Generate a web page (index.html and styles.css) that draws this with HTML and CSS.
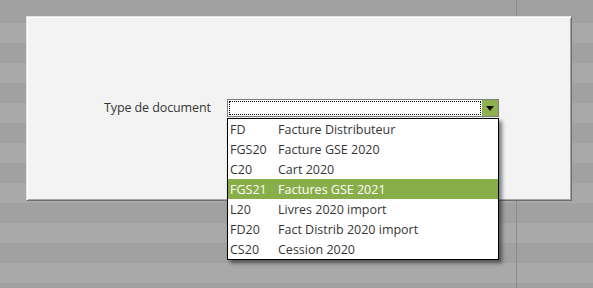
FILE: index.html
```html
<!DOCTYPE html>
<html lang="fr">
<head>
	<meta charset="UTF-8">
	<title>Type de document</title>
	<link rel="stylesheet" href="styles.css">
</head>
<body>
	<div class="dialog">
		<div class="field">
			<label class="field-label">Type de document</label>
			<div class="combo">
				<div class="combo-input"><span class="focus-box"></span></div>
				<div class="combo-btn"><span class="arrow"></span></div>

				<ul class="combo-list">
					<li><span class="code">FD</span><span class="name">Facture Distributeur</span></li>
					<li><span class="code">FGS20</span><span class="name">Facture GSE 2020</span></li>
					<li><span class="code">C20</span><span class="name">Cart 2020</span></li>
					<li class="selected"><span class="code">FGS21</span><span class="name">Factures GSE 2021</span></li>
					<li><span class="code">L20</span><span class="name">Livres 2020 import</span></li>
					<li><span class="code">FD20</span><span class="name">Fact Distrib 2020 import</span></li>
					<li><span class="code">CS20</span><span class="name">Cession 2020</span></li>
				</ul>
			</div>
		</div>
	</div>
</body>
</html>
```

FILE: styles.css
```css
body, ul, li{
	margin: 0px;
	padding: 0px;
}
ul{
	list-style: none;
}
body{
	height: 288px;
	overflow: hidden;
	font-family: "Open Sans", "Noto Sans", sans-serif;
	font-size: 12.5px;
	color: #363636;
	background:
		linear-gradient(#8c8c8c, #8c8c8c) 516px 0 / 1px 100% no-repeat,
		repeating-linear-gradient(#a1a1a1 0px, #a1a1a1 20px, #a9a9a9 20px, #a9a9a9 40px) 0 3px;
	background-color: #a9a9a9;
	padding-top: 16px;
	box-sizing: border-box;
}
.dialog{
	width: 546px;
	height: 185px;
	margin-left: 26px;
	box-sizing: border-box;
	background: #f3f3f3;
	border: 1px solid;
	border-color: #e2e2e2 #6e6e6e #6e6e6e #e2e2e2;
	box-shadow: inset 1px 1px #ffffff, inset -1px -1px #a6a6a6;
	padding: 82px 0 0 77px;
}
.field{
	display: flex;
	align-items: center;
}
.field-label{
	width: 123px;
	line-height: 18px;
	letter-spacing: -0.1px;
}
.combo{
	position: relative;
	width: 272px;
	height: 18px;
	display: flex;
	border: 1px solid #7d7d7d;
	box-sizing: border-box;
	background: #ffffff;
}
.combo-input{
	flex: 1;
	padding: 1px;
	display: flex;
}
.focus-box{
	flex: 1;
	border: 1px dotted #000000;
}
.combo-btn{
	width: 16px;
	background: #8db14f;
	display: flex;
	align-items: center;
	justify-content: center;
}
.arrow{
	width: 0;
	height: 0;
	border-left: 4px solid transparent;
	border-right: 4px solid transparent;
	border-top: 5px solid #111111;
	margin-top: 1px;
}
/* liste deroulante ouverte */
.combo-list{
	position: absolute;
	top: 18px;
	left: -1px;
	width: 272px;
	box-sizing: border-box;
	background: #ffffff;
	border: 1px solid #000000;
	box-shadow: 3px 3px 4px rgba(0, 0, 0, 0.5);
}
.combo-list li{
	display: flex;
	height: 20px;
	line-height: 21px;
	padding-left: 2px;
}
.combo-list li.selected{
	background: #88ae4a;
	color: #ffffff;
}
.combo-list .code{
	width: 48px;
}
```
